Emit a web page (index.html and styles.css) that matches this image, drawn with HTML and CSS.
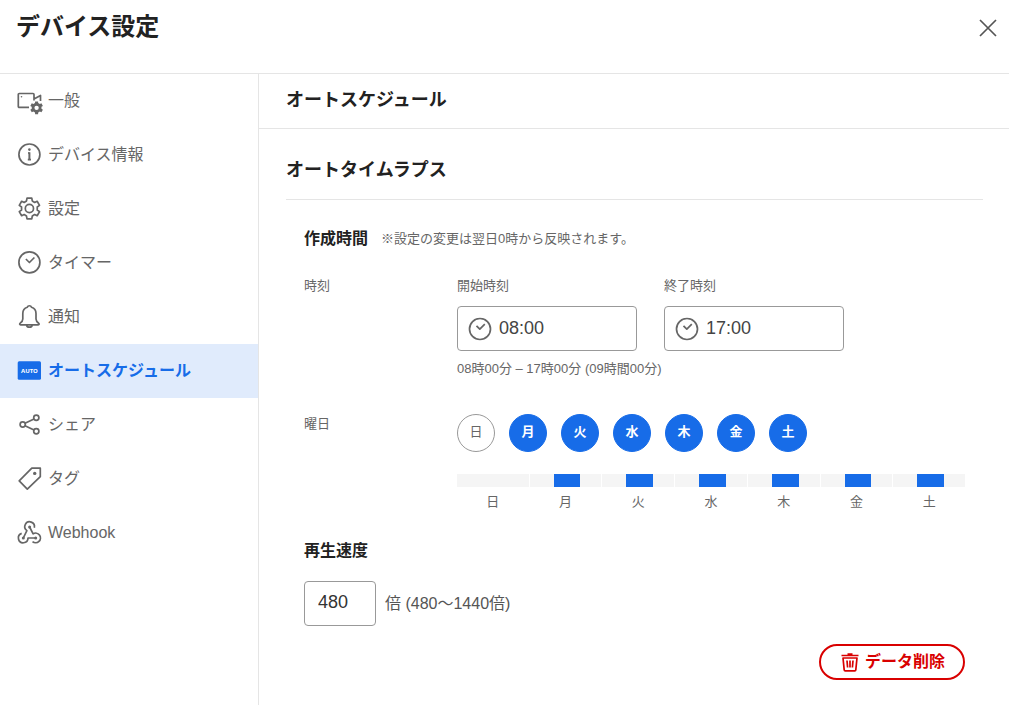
FILE: index.html
```html
<!DOCTYPE html>
<html lang="ja">
<head>
<meta charset="utf-8">
<meta name="viewport" content="width=device-width, initial-scale=1">
<title>デバイス設定</title>
<link rel="stylesheet" href="styles.css">
</head>
<body>
<svg class="defs" aria-hidden="true">
  <symbol id="clock" viewBox="0 0 24 24">
    <circle cx="12" cy="12" r="10.5"/>
    <path d="M8.5 8.800l3.300 3.400 5-5"/>
  </symbol>
</svg>
<header class="topbar">
  <h1 class="title">デバイス設定</h1>
  <button class="close" type="button" aria-label="閉じる">
    <svg viewBox="0 0 18 18" width="18" height="18"><path d="M1 1l16 16M17 1L1 17"/></svg>
  </button>
</header>
<div class="layout">
  <nav class="sidebar">
    <a class="item" href="#general">
      <svg class="icon" viewBox="0 0 28 28"><path d="M13 20.400H3.300a1 1 0 0 1-1-1V7.500a1 1 0 0 1 1-1H17a1 1 0 0 1 1 1v6M18 12l6.500-3.600V14"/><circle class="solid" cx="5.500" cy="9.700" r=".8"/><path class="solid" transform="translate(20.600 20.800) scale(.62)" fill-rule="evenodd" d="M-2.380-10.330h4.760l.22 2.770 2.650 1.520 2.500-1.190 2.390 4.130-2.290 1.570v3.060l2.290 1.570-2.390 4.130-2.500-1.190-2.650 1.520-.22 2.770h-4.760l-.22-2.770-2.650-1.520-2.500 1.190-2.390-4.130 2.290-1.570v-3.060l-2.290-1.570 2.390-4.130 2.500 1.190 2.650-1.520zM0-3.500a3.500 3.500 0 1 0 0 7a3.500 3.500 0 0 0 0-7z"/></svg>
      <span>一般</span>
    </a>
    <a class="item" href="#info">
      <svg class="icon" viewBox="0 0 28 28"><circle cx="13.400" cy="13.500" r="10.500"/><circle class="solid" cx="13.400" cy="8.600" r="1.300"/><path class="thick" d="M13.400 11.300v7.700"/><path d="M11.800 18.600h3.200M12 12h1.500"/></svg>
      <span>デバイス情報</span>
    </a>
    <a class="item" href="#settings">
      <svg class="icon" viewBox="0 0 28 28"><path transform="translate(13.400 13.500)" d="M-2.380-10.330h4.760l.52 2.770 2.350 1.520 2.500-1.190 2.390 4.130-2.290 1.570v3.060l2.290 1.570-2.390 4.130-2.500-1.190-2.350 1.520-.52 2.770h-4.760l-.52-2.770-2.350-1.520-2.500 1.190-2.390-4.130 2.290-1.570v-3.060l-2.290-1.570 2.390-4.130 2.500 1.190 2.350-1.520z"/><circle cx="13.400" cy="13.500" r="4.100"/></svg>
      <span>設定</span>
    </a>
    <a class="item" href="#timer">
      <svg class="icon" viewBox="0 0 28 28"><circle cx="13.400" cy="13.400" r="10.500"/><path d="M9.900 10l3.500 3.500 5-5"/></svg>
      <span>タイマー</span>
    </a>
    <a class="item" href="#notice">
      <svg class="icon" viewBox="0 0 28 28"><path d="M11.300 4.300a2.200 2.200 0 0 1 4.200 0c3 1 4.500 3.200 4.500 6.200v5.500c0 2 1 3 2.600 4.200.9.700.6 1.600-.4 1.600H4.600c-1 0-1.300-.9-.4-1.600C5.800 19 6.800 18 6.800 16v-5.500c0-3 1.500-5.200 4.500-6.200zM10.500 22c.3 1.500 1.500 2.200 2.900 2.200s2.600-.7 2.900-2.200"/></svg>
      <span>通知</span>
    </a>
    <a class="item active" href="#auto" aria-current="page">
      <svg class="icon" viewBox="0 0 28 28"><rect class="solid" x="1.700" y="4.300" width="23.300" height="18.400" rx="1.500"/><text class="auto" x="13.400" y="15.700" text-anchor="middle">AUTO</text></svg>
      <span>オートスケジュール</span>
    </a>
    <a class="item" href="#share">
      <svg class="icon" viewBox="0 0 28 28"><circle cx="6.700" cy="13.500" r="2.600"/><circle cx="20.300" cy="6.800" r="2.600"/><circle cx="20.300" cy="20.200" r="2.600"/><path d="M9 12.300l9-4.400M9 14.700l9 4.400"/></svg>
      <span>シェア</span>
    </a>
    <a class="item" href="#tag">
      <svg class="icon" viewBox="0 0 28 28"><path d="M15.800 3.200h8.500v8.500L11.300 24.200 3.200 15.800z"/><circle class="solid" cx="18.700" cy="8.400" r="1.700"/></svg>
      <span>タグ</span>
    </a>
    <a class="item" href="#webhook">
      <svg class="icon" viewBox="0 0 28 28"><path d="M18.300 8.700a4.800 4.800 0 1 0-7.400 2.900L7.300 19M5.700 14.400a4.800 4.800 0 1 0 6.300 4.600h7.700M16.500 22.600a4.800 4.800 0 1 0 .6-7.700L13.600 8"/><circle class="solid" cx="13.600" cy="8" r="1.500"/><circle class="solid" cx="7.300" cy="19" r="1.500"/><circle class="solid" cx="19.700" cy="19" r="1.500"/></svg>
      <span>Webhook</span>
    </a>
  </nav>
  <main class="main">
    <h2 class="page-title">オートスケジュール</h2>
    <section class="section">
      <h3 class="section-title">オートタイムラプス</h3>
      <form class="form">
        <div class="heading">
          <h4 class="subtitle">作成時間</h4>
          <p class="note">※設定の変更は翌日0時から反映されます。</p>
        </div>
        <div class="row">
          <span class="label">時刻</span>
          <div>
            <div class="times">
              <div class="field">
                <label class="label" for="start">開始時刻</label>
                <div class="timebox"><svg class="clock" width="24" height="24"><use href="#clock"/></svg><input id="start" type="text" value="08:00"></div>
              </div>
              <div class="field">
                <label class="label" for="end">終了時刻</label>
                <div class="timebox"><svg class="clock" width="24" height="24"><use href="#clock"/></svg><input id="end" type="text" value="17:00"></div>
              </div>
            </div>
            <p class="summary">08時00分 – 17時00分 (09時間00分)</p>
          </div>
        </div>
        <div class="row">
          <span class="label">曜日</span>
          <div>
            <div class="days">
              <button class="day" type="button" aria-pressed="false">日</button>
              <button class="day" type="button" aria-pressed="true">月</button>
              <button class="day" type="button" aria-pressed="true">火</button>
              <button class="day" type="button" aria-pressed="true">水</button>
              <button class="day" type="button" aria-pressed="true">木</button>
              <button class="day" type="button" aria-pressed="true">金</button>
              <button class="day" type="button" aria-pressed="true">土</button>
            </div>
            <div class="week">
              <div class="slot"><div class="track"></div>日</div>
              <div class="slot"><div class="track on"></div>月</div>
              <div class="slot"><div class="track on"></div>火</div>
              <div class="slot"><div class="track on"></div>水</div>
              <div class="slot"><div class="track on"></div>木</div>
              <div class="slot"><div class="track on"></div>金</div>
              <div class="slot"><div class="track on"></div>土</div>
            </div>
          </div>
        </div>
        <h4 class="subtitle speed-title"><label for="speed">再生速度</label></h4>
        <div class="speed">
          <input class="speed-input" id="speed" type="text" value="480">
          <span>倍 (480〜1440倍)</span>
        </div>
        <button class="delete" type="button">
          <svg viewBox="0 0 20 20" width="20" height="20"><path d="M1.500 3.500h17M7.500 2h5M3 6l1.200 11.800q.1 1 1 1h9.600q.9 0 1-1L17 6zM7 8.500l.6 7M10 8.500v7M13 8.500l-.6 7"/></svg>
          <span>データ削除</span>
        </button>
      </form>
    </section>
  </main>
</div>
</body>
</html>
```
FILE: styles.css
```css
* { box-sizing: border-box; }

body {
  margin: 0;
  min-height: 100vh;
  display: flex;
  flex-direction: column;
  background: #fff;
  color: #666;
  font: 16px/24px "Liberation Sans", "Noto Sans CJK JP", sans-serif;
}

h1, h2, h3, h4, p { margin: 0; }
button, input { font: inherit; color: inherit; }
svg { fill: none; stroke: currentColor; stroke-width: 1.7; stroke-linejoin: round; flex: none; }
.defs { position: absolute; width: 0; height: 0; }
.solid { fill: currentColor; stroke: none; }
.thick { stroke-width: 2; }

.topbar {
  display: flex;
  justify-content: space-between;
  align-items: flex-start;
  padding: 11px 12px 30px 16px;
  border-bottom: 1px solid #e5e5e5;
}
.title { font-size: 24px; line-height: 32px; color: #222; }
.close {
  display: flex;
  padding: 8px 0 6px 8px;
  border: 0;
  background: none;
  color: #555;
}

.layout { flex: 1; display: flex; }
.sidebar { width: 259px; flex: none; border-right: 1px solid #e5e5e5; }
.item {
  display: flex;
  align-items: center;
  gap: 4px;
  height: 54px;
  padding: 0 16px;
  color: #666;
  text-decoration: none;
}
.active { background: #e0ebfc; color: #176ce8; font-weight: bold; }
.icon { width: 28px; height: 28px; }
.auto { font: bold 6px "Noto Sans", sans-serif; fill: #fff; stroke: none; }

.main { flex: 1; min-width: 0; }
.page-title {
  padding: 14px 27px 16px;
  border-bottom: 1px solid #e5e5e5;
  font-size: 18px;
  color: #222;
}
.section { padding: 29px 26px 24px 27px; }
.section-title {
  padding-bottom: 17px;
  border-bottom: 1px solid #e5e5e5;
  font-size: 18px;
  color: #222;
}
.form { display: flex; flex-direction: column; padding: 27px 18px 0; }
.heading { display: flex; align-items: center; gap: 13px; margin-bottom: 25px; }
.subtitle { font-size: 16px; color: #222; }
.note, .label, .summary { font-size: 13px; line-height: 20px; }
.row {
  display: grid;
  grid-template-columns: 153px minmax(0, 1fr);
  align-items: start;
  margin-bottom: 27px;
}
.row + .row { margin-top: 8px; }
.times { display: flex; gap: 27px; }
.field { display: flex; flex-direction: column; gap: 10px; width: 180px; }
.timebox {
  display: flex;
  align-items: center;
  gap: 7px;
  height: 45px;
  padding: 0 10px;
  border: 1px solid #999;
  border-radius: 4px;
  font-size: 18px;
  color: #444;
}
.timebox input { flex: 1; min-width: 0; padding: 0 0 2px; border: 0; outline: 0; background: none; }
.clock { color: #666; }
.summary { margin-top: 8px; }

.days { display: flex; gap: 14px; }
.day {
  width: 38px;
  height: 38px;
  padding: 0 0 2px;
  border: 1px solid #999;
  border-radius: 50%;
  background: #fff;
  font-size: 13px;
  line-height: 20px;
}
.day[aria-pressed="true"] { border-color: #176ce8; background: #176ce8; color: #fff; font-weight: bold; }
.week { display: grid; grid-template-columns: repeat(7, 1fr); gap: 1px; margin-top: 22px; }
.slot { font-size: 13px; line-height: 20px; text-align: center; }
.track { height: 13px; margin-bottom: 5px; background: #f5f5f5; }
/* 08:00 to 17:00 of a 24-hour day */
.on { background: linear-gradient(90deg, #f5f5f5 33.3%, #176ce8 33.3%, #176ce8 70.8%, #f5f5f5 70.8%); }

.speed-title { margin-bottom: 18px; }
.speed { display: flex; align-items: center; gap: 9px; margin-bottom: 18px; color: #555; }
.speed-input {
  width: 72px;
  height: 45px;
  padding: 0 13px 2px;
  border: 1px solid #999;
  border-radius: 4px;
  font-size: 18px;
  color: #333;
}
.delete {
  align-self: flex-end;
  display: flex;
  align-items: center;
  gap: 5px;
  height: 36px;
  padding: 0 18px 0 19px;
  border: 2px solid #d90000;
  border-radius: 18px;
  background: #fff;
  color: #d90000;
  font-weight: bold;
}
.delete span { padding-bottom: 1px; }
```
